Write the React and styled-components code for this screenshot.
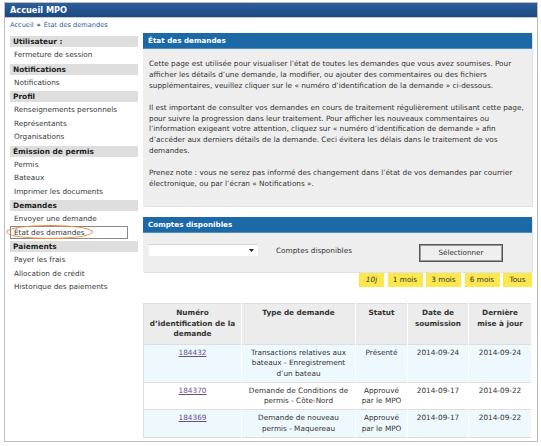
import React from 'react'
import styled, { createGlobalStyle } from 'styled-components'

const GlobalStyle = createGlobalStyle`
  body {
    margin: 0;
    background: #fff;
    font-family: "DejaVu Sans", Verdana, sans-serif;
    font-size: 7.3px;
    color: #333;
  }
`;

const menu = [
  { title: 'Utilisateur :', items: ['Fermeture de session'] },
  { title: 'Notifications', items: ['Notifications'] },
  { title: 'Profil', items: ['Renseignements personnels', 'Représentants', 'Organisations'] },
  { title: 'Émission de permis', items: ['Permis', 'Bateaux', 'Imprimer les documents'] },
  { title: 'Demandes', items: ['Envoyer une demande', 'État des demandes'] },
  { title: 'Paiements', items: ['Payer les frais', 'Allocation de crédit', 'Historique des paiements'] },
];

const rows = [
  { id: '184432', type: 'Transactions relatives aux bateaux - Enregistrement d\u2019un bateau', status: 'Présenté', sent: '2014-09-24', updated: '2014-09-24' },
  { id: '184370', type: 'Demande de Conditions de permis - Côte-Nord', status: 'Approuvé par le MPO', sent: '2014-09-17', updated: '2014-09-22' },
  { id: '184369', type: 'Demande de nouveau permis - Maquereau', status: 'Approuvé par le MPO', sent: '2014-09-17', updated: '2014-09-22' },
];

const periods = [
  { label: '10j', w: 25 },
  { label: '1 mois', w: 35 },
  { label: '3 mois', w: 35 },
  { label: '6 mois', w: 35 },
  { label: 'Tous', w: 29 },
];

export default function App() {
  return (
    <>
      <GlobalStyle />
      <Frame>
        <TopBar>Accueil MPO</TopBar>
        <Crumbs>
          <CrumbLink>Accueil</CrumbLink>
          <Sep>»</Sep>
          <span>État des demandes</span>
        </Crumbs>
        <Body>
          <Sidebar>
            {menu.map((group) => (
              <div key={group.title}>
                <GroupTitle>{group.title}</GroupTitle>
                {group.items.map((item) => (
                  <MenuItem key={item} $active={item === 'État des demandes'}>
                    {item}
                    {item === 'État des demandes' && <Circle />}
                  </MenuItem>
                ))}
              </div>
            ))}
          </Sidebar>

          <Main>
            <Panel>
              <PanelHead>État des demandes</PanelHead>
              <PanelText>
                <p>
                  Cette page est utilisée pour visualiser l’état de toutes les demandes que vous avez soumises. Pour
                  afficher les détails d’une demande, la modifier, ou ajouter des commentaires ou des fichiers
                  supplémentaires, veuillez cliquer sur le « numéro d’identification de la demande » ci-dessous.
                </p>
                <p>
                  Il est important de consulter vos demandes en cours de traitement régulièrement utilisant cette page,
                  pour suivre la progression dans leur traitement. Pour afficher les nouveaux commentaires ou
                  l’information exigeant votre attention, cliquez sur « numéro d’identification de demande » afin
                  d’accéder aux derniers détails de la demande. Ceci évitera les délais dans le traitement de vos
                  demandes.
                </p>
                <p>
                  Prenez note : vous ne serez pas informé des changement dans l’état de vos demandes par courrier
                  électronique, ou par l’écran « Notifications ».
                </p>
              </PanelText>
            </Panel>

            <Panel>
              <PanelHead>Comptes disponibles</PanelHead>
              <AccountRow>
                <FakeSelect>
                  <svg width="5" height="3" viewBox="0 0 5 3"><path d="M0 0h5L2.5 3z" fill="#222" /></svg>
                </FakeSelect>
                <AccountLabel>Comptes disponibles</AccountLabel>
                <PickButton>Sélectionner</PickButton>
              </AccountRow>
            </Panel>

            <Periods>
              {periods.map((p) => (
                <Period key={p.label} $w={p.w} $italic={p.label === '10j'}>{p.label}</Period>
              ))}
            </Periods>

            <Table>
              <colgroup>
                <col style={{ width: 98 }} />
                <col style={{ width: 114 }} />
                <col style={{ width: 52 }} />
                <col style={{ width: 61 }} />
                <col />
              </colgroup>
              <thead>
                <tr>
                  <Th>Numéro d’identification de la demande</Th>
                  <Th>Type de demande</Th>
                  <Th>Statut</Th>
                  <Th>Date de soumission</Th>
                  <Th>Dernière mise à jour</Th>
                </tr>
              </thead>
              <tbody>
                {rows.map((r, i) => (
                  <Tr key={r.id} $alt={i % 2 === 0}>
                    <Td><IdLink>{r.id}</IdLink></Td>
                    <Td>{r.type}</Td>
                    <Td>{r.status}</Td>
                    <Td>{r.sent}</Td>
                    <Td>{r.updated}</Td>
                  </Tr>
                ))}
              </tbody>
            </Table>
          </Main>
        </Body>
      </Frame>
    </>
  )
}

const Frame = styled.div`
  margin: 2px 0 0 4px;
  width: 532px;
  height: 438px;
  border: 1px solid #bdbdbd;
  overflow: hidden;
  display: flex;
  flex-direction: column;
`;

const TopBar = styled.div`
  height: 14px;
  line-height: 14px;
  padding-left: 5px;
  background: linear-gradient(#2c5f9c, #1b4882);
  color: #fff;
  font-weight: bold;
  font-size: 8.2px;
  border-bottom: 1px solid #c8c8c8;
`;

const Crumbs = styled.div`
  height: 15px;
  line-height: 15px;
  padding-left: 5px;
  font-size: 6.6px;
  color: #2d5d8f;
  display: flex;
  gap: 3px;
`;

const CrumbLink = styled.span`
  color: #2d5d8f;
`;

const Sep = styled.span`
  font-weight: bold;
  color: #444;
`;

const Body = styled.div`
  display: flex;
  gap: 5px;
  padding: 0 5px 0 5px;
  flex: 1;
`;

const Sidebar = styled.nav`
  width: 128px;
  flex: none;
  padding-top: 1px;
`;

const GroupTitle = styled.div`
  height: 11px;
  line-height: 11px;
  margin: 2px 0 1px;
  padding-left: 3px;
  background: #dedede;
  font-weight: bold;
  color: #222;
  font-size: 7.4px;
`;

const MenuItem = styled.div`
  position: relative;
  height: 13.5px;
  line-height: 11.5px;
  padding-left: 3px;
  color: #3a3a3a;
  width: 118px;
  box-sizing: border-box;
  border: 1px solid ${(p) => (p.$active ? '#8a8a8a' : 'transparent')};
`;

const Circle = styled.span`
  position: absolute;
  left: -5px;
  top: -1.5px;
  width: 85px;
  height: 12px;
  border: 1.5px solid #ee8a3c;
  border-radius: 50%;
`;

const Main = styled.main`
  flex: 1;
  display: flex;
  flex-direction: column;
`;

const Panel = styled.section`
  background: #eeeeee;
  margin-bottom: 11px;
  box-shadow: 1px 1px 0 #e2e2e2;
  &:nth-of-type(2) {
    margin-bottom: 0;
  }
`;

const PanelHead = styled.h2`
  margin: 0;
  height: 15px;
  line-height: 15px;
  padding-left: 5px;
  background: #1b69a6;
  border-bottom: 1px solid #4f8cbc;
  color: #fff;
  font-size: 7.2px;
  font-weight: bold;
`;

const PanelText = styled.div`
  padding: 10px 4px 16px 6px;
  line-height: 10.8px;
  color: #333;
  p {
    margin: 0 0 11.5px;
  }
  p:last-child {
    margin: 0;
  }
`;

const AccountRow = styled.div`
  display: flex;
  align-items: flex-start;
  padding: 11px 0 10px 6px;
`;

const FakeSelect = styled.div`
  width: 109px;
  height: 12px;
  box-sizing: border-box;
  background: #fff;
  border-top: 1px solid #d4d4d4;
  display: flex;
  align-items: center;
  justify-content: flex-end;
  padding-right: 4px;
`;

const AccountLabel = styled.span`
  margin-left: 18px;
  line-height: 13px;
`;

const PickButton = styled.button`
  margin-left: 67px;
  width: 84px;
  height: 18px;
  border: 1px solid #555;
  box-shadow: inset 0 0 0 1px #9a9a9a;
  background: #efefef;
  font-family: inherit;
  font-size: 7.2px;
  color: #333;
  padding: 0;
`;

const Periods = styled.div`
  display: flex;
  justify-content: flex-end;
  gap: 3.5px;
  margin-top: 1px;
  margin-bottom: 16px;
`;

const Period = styled.span`
  background: #fbe74e;
  height: 14px;
  line-height: 14px;
  width: ${(p) => p.$w}px;
  white-space: nowrap;
  text-align: center;
  font-style: ${(p) => (p.$italic ? 'italic' : 'normal')};
  color: #333;
`;

const Table = styled.table`
  width: 389px;
  border-collapse: collapse;
  table-layout: fixed;
  border: 1px solid #dedede;
`;

const Th = styled.th`
  background: #ececec;
  padding: 4px 3px 4px;
  line-height: 10.6px;
  font-weight: bold;
  vertical-align: top;
  border-right: 1px solid #fff;
  color: #333;
`;

const Tr = styled.tr`
  background: ${(p) => (p.$alt ? '#eef9fd' : '#fff')};
  border-top: 1px solid #dedede;
`;

const Td = styled.td`
  padding: 3px 4px 2.5px;
  line-height: 10.5px;
  text-align: center;
  vertical-align: top;
  border-right: 1px solid #fff;
  color: #333;
`;

const IdLink = styled.a`
  color: #6b4e8f;
  text-decoration: underline;
`;
